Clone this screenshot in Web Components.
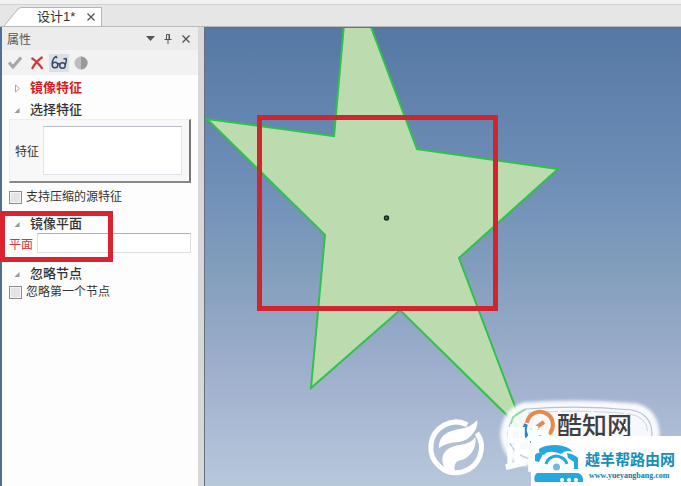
<!DOCTYPE html>
<html lang="zh-CN">
<head>
<meta charset="utf-8">
<meta name="viewport" content="width=device-width, initial-scale=1">
<title>设计1*</title>
<style>
    body {
        margin: 0;
        font-family: "Liberation Sans", "Noto Sans CJK SC", sans-serif;
        font-size: 12px;
        color: #333;
    }
</style>
</head>
<body>
<design-app>
    <tab-strip slot="tabs">设计1*</tab-strip>
    <property-panel slot="panel" heading="属性">
        <tree-section collapsed alert>镜像特征</tree-section>
        <tree-section>选择特征
            <feature-list slot="content">特征</feature-list>
            <check-option slot="content">支持压缩的源特征</check-option>
        </tree-section>
        <tree-section marked>镜像平面
            <plane-field slot="content">平面</plane-field>
        </tree-section>
        <tree-section>忽略节点
            <check-option slot="content">忽略第一个节点</check-option>
        </tree-section>
    </property-panel>
    <model-canvas slot="canvas"><site-marks></site-marks></model-canvas>
</design-app>

<script>
class DesignApp extends HTMLElement {
    constructor() {
        super();
        this.attachShadow({mode: "open"}).innerHTML = `
            <style>
                :host {
                    display: flex;
                    flex-direction: column;
                    height: 100vh;
                    background: #e6e6e6;
                    overflow: hidden;
                }

                .ribbon {
                    height: 4px;
                    background: #f1f1f1;
                    border-bottom: 1px solid #d2d2d2;
                }

                main {
                    flex: 1;
                    display: grid;
                    grid-template-columns: 204px 1fr;
                    min-height: 0;
                }
            </style>
            <div class="ribbon"></div>
            <slot name="tabs"></slot>
            <main>
                <slot name="panel"></slot>
                <slot name="canvas"></slot>
            </main>
        `;
    }
}

class TabStrip extends HTMLElement {
    constructor() {
        super();
        this.attachShadow({mode: "open"}).innerHTML = `
            <style>
                :host {
                    display: flex;
                    align-items: flex-end;
                    height: 21px;
                    padding-left: 4px;
                    border-bottom: 1px solid #b9b9b9;
                }

                .edge {
                    width: 18px;
                    height: 19px;
                    flex: none;
                }

                .tab {
                    display: flex;
                    align-items: center;
                    gap: 10px;
                    box-sizing: border-box;
                    height: 19px;
                    padding: 0 4px 0 15px;
                    background: #fff;
                    border-top: 1px solid #b5b5b5;
                    border-right: 1px solid #b5b5b5;
                    font-size: 13px;
                    line-height: 16px;
                    white-space: nowrap;
                }

                button {
                    display: flex;
                    padding: 2px;
                    border: 0;
                    background: none;
                }
            </style>
            <svg class="edge" viewBox="0 0 18 19">
                <path d="M0 19 14 2Q16 .5 18 .5V19Z" fill="#fff"/>
                <path d="M0 19 14 2Q16 .5 18 .5" fill="none" stroke="#b5b5b5"/>
            </svg>
            <div class="tab">
                <slot></slot>
                <button aria-label="关闭">
                    <svg width="8" height="8" stroke="#555" stroke-width="1.3"><path d="M.5.5l7 7M7.5.5l-7 7"/></svg>
                </button>
            </div>
        `;
    }
}

class PropertyPanel extends HTMLElement {
    constructor() {
        super();
        this.attachShadow({mode: "open"});
    }

    connectedCallback() {
        this.shadowRoot.innerHTML = `
            <style>
                :host {
                    display: flex;
                    flex-direction: column;
                    box-sizing: border-box;
                    background: #fdfdfd;
                    border-left: 2px solid #4b7296;
                    border-right: 6px solid #d7d8d9;
                }

                header, nav {
                    display: flex;
                    align-items: center;
                    box-sizing: border-box;
                    background: #ececec;
                }

                header {
                    height: 23px;
                    padding: 0 3px 0 5px;
                    color: #555;
                }

                header span {
                    flex: 1;
                }

                nav {
                    height: 25px;
                    padding-left: 3px;
                    gap: 2px;
                    background: #f2f2f2;
                }

                button {
                    display: flex;
                    align-items: center;
                    justify-content: center;
                    width: 18px;
                    height: 18px;
                    padding: 0;
                    border: 0;
                    background: none;
                }

                nav button {
                    width: 20px;
                }

                .on {
                    background: #dedfe2;
                }

                section {
                    display: flex;
                    flex-direction: column;
                    padding: 4px 7px 0;
                }
            </style>
            <header>
                <span>${this.getAttribute("heading")}</span>
                <button aria-label="菜单"><svg width="9" height="5"><path d="M0 0h9L4.500 5Z" fill="#555"/></svg></button>
                <button aria-label="固定"><svg width="8" height="10" fill="none" stroke="#555"><path d="M2.500.5h3v5h-3ZM5 .5v5M.5 5.500h7M4 6v4"/></svg></button>
                <button aria-label="关闭"><svg width="8" height="8" stroke="#555" stroke-width="1.400"><path d="M.5.5l7 7M7.500.5l-7 7"/></svg></button>
            </header>
            <nav>
                <button aria-label="确定"><svg width="14" height="13" fill="none" stroke="#a5a5a5" stroke-width="3"><path d="M1 6.500 5 11 13 1.500"/></svg></button>
                <button aria-label="取消"><svg width="14" height="14" fill="none" stroke="#d2373b" stroke-width="2.200"><path d="M1.500 2Q7 5 12.500 13M12.500 1Q6 5 2 13"/></svg></button>
                <button class="on" aria-label="预览">
                    <svg width="17" height="15" fill="none" stroke="#34496e" stroke-width="1.500">
                        <circle cx="4" cy="10" r="2.800"/>
                        <circle cx="11.500" cy="10.500" r="2.800"/>
                        <path d="M6.500 8.500 9 9M1.200 9Q1.500 3 5 1.500L6 3M14.200 10Q16 5 15 3.500L12.500 4"/>
                    </svg>
                </button>
                <button aria-label="显示"><svg width="14" height="14"><circle cx="7" cy="7" r="6.500" fill="#bdbdbd"/><path d="M7 .5a6.500 6.500 0 0 1 0 13Z" fill="#999"/></svg></button>
            </nav>
            <section><slot></slot></section>
        `;
    }
}

class TreeSection extends HTMLElement {
    constructor() {
        super();
        this.attachShadow({mode: "open"});
    }

    connectedCallback() {
        const arrow = this.hasAttribute("collapsed")
            ? `<path d="M1.500 1 5.500 4.500 1.500 8Z" fill="none" stroke="#aaa"/>`
            : `<path d="M5.500 2v5h-5Z" fill="#999"/>`;
        this.shadowRoot.innerHTML = `
            <style>
                :host {
                    display: block;
                    position: relative;
                    padding-bottom: 9px;
                }

                :host([collapsed]) {
                    padding-bottom: 4px;
                }

                h2 {
                    display: flex;
                    align-items: center;
                    gap: 9px;
                    margin: 0;
                    padding-left: 5px;
                    font-size: 13px;
                    font-weight: 500;
                    line-height: 18px;
                }

                :host([alert]) h2 {
                    color: #d81e24;
                    font-weight: bold;
                }

                :host([marked]) {
                    padding-bottom: 12px;
                }

                :host([marked])::after {
                    content: "";
                    position: absolute;
                    left: -9px;
                    top: -4px;
                    bottom: 3px;
                    width: 103px;
                    border: 5px solid #d9242f;
                }
            </style>
            <h2><svg width="7" height="9">${arrow}</svg><slot></slot></h2>
            <slot name="content"></slot>
        `;
    }
}

class FeatureList extends HTMLElement {
    constructor() {
        super();
        this.attachShadow({mode: "open"}).innerHTML = `
            <style>
                :host {
                    display: block;
                    margin-bottom: 5px;
                    background: #f8f8f9;
                    border: 1px solid #eceef0;
                    border-right: 2px solid #777;
                    border-bottom: 2px solid #888;
                }

                label {
                    display: flex;
                    align-items: center;
                    gap: 4px;
                    padding: 6px 7px 6px 5px;
                }

                textarea {
                    flex: 1;
                    min-width: 0;
                    box-sizing: border-box;
                    height: 49px;
                    background: #fff;
                    border: 1px solid #dfe3ea;
                    border-top-color: #b9bdc6;
                    resize: none;
                }
            </style>
            <label><slot></slot><textarea></textarea></label>
        `;
    }
}

class PlaneField extends HTMLElement {
    constructor() {
        super();
        this.attachShadow({mode: "open"}).innerHTML = `
            <style>
                :host {
                    display: block;
                    color: #d8343a;
                }

                label {
                    display: flex;
                    align-items: center;
                    gap: 4px;
                }

                input {
                    flex: 1;
                    min-width: 0;
                    box-sizing: border-box;
                    height: 20px;
                    background: #fff;
                    border: 1px solid #dfdfdf;
                    border-top-color: #b0b0b0;
                }
            </style>
            <label><slot></slot><input type="text"></label>
        `;
    }
}

class CheckOption extends HTMLElement {
    constructor() {
        super();
        this.attachShadow({mode: "open"}).innerHTML = `
            <style>
                :host {
                    display: block;
                    line-height: 18px;
                }

                label {
                    display: flex;
                    align-items: center;
                    gap: 4px;
                }

                input {
                    appearance: none;
                    width: 13px;
                    height: 13px;
                    margin: 0;
                    border: 1px solid #8c8c8c;
                    background: #e4e4e4;
                    box-shadow: inset 0 0 0 1px #f6f6f6;
                }

                input:checked {
                    background: #777;
                }
            </style>
            <label><input type="checkbox"><slot></slot></label>
        `;
    }
}

class ModelCanvas extends HTMLElement {
    constructor() {
        super();
        this.attachShadow({mode: "open"}).innerHTML = `
            <style>
                :host {
                    display: block;
                    position: relative;
                    min-width: 0;
                    overflow: hidden;
                    border-left: 1px solid #65707e;
                    border-top: 1px solid #65707e;
                    background: linear-gradient(#5578a4, #6f8fb7 34%, #849fbd 54%, #a2b2cf 78%, #b7c8db);
                }

                .scene {
                    display: block;
                    width: 100%;
                    height: 100%;
                }
            </style>
            <svg class="scene" role="img" aria-label="五角星">
                <path d="M139.500-9 129 108 2 91 120 207 106 360 195 282 320 405 254 230 353 141 212 121 163-9Z"
                    fill="#bcdcb0" stroke="#2fc24a" stroke-width="2"/>
                <circle cx="181.500" cy="190" r="2" fill="#456b50" stroke="#102c1c" stroke-width="1.500"/>
                <rect x="54.500" y="89.500" width="236" height="191" fill="none" stroke="#d0252f" stroke-width="5"/>
            </svg>
            <slot></slot>
        `;
    }
}

class SiteMarks extends HTMLElement {
    constructor() {
        super();
        this.attachShadow({mode: "open"}).innerHTML = `
            <style>
                :host {
                    position: absolute;
                    right: 0;
                    bottom: 0;
                }

                svg {
                    display: block;
                }

                text {
                    font-family: "Noto Sans CJK SC", sans-serif;
                    font-weight: bold;
                }

                .brand {
                    font-size: 25px;
                    font-weight: 500;
                }

                .url {
                    font-family: "Liberation Serif", serif;
                    font-size: 8px;
                }
            </style>
            <svg width="261" height="96">
                <defs>
                    <filter id="fuzz" x="-10%" y="-20%" width="120%" height="140%"><feGaussianBlur stdDeviation="1.500"/></filter>
                </defs>
                <!-- round badge -->
                <path d="M104 14Q160 10 216 15 236 20 238 43 236 72 215 74H105Q84 70 82 44 84 20 104 14Z"
                    fill="#fff" fill-opacity=".9" stroke="#fff" stroke-opacity=".7" stroke-width="4" filter="url(#fuzz)"/>
                <path d="M106 19Q160 15 212 20 231 24 232 43 230 64 212 68H107Q89 62 88 43 90 24 106 19Z"
                    fill="none" stroke="#b5c3d8" stroke-width="1.200"/>
                <path d="M108 23Q160 19 210 24 227 27 228 43"
                    fill="none" stroke="#cbd5e4" stroke-dasharray="30 3"/>
                <path d="M106 19 93 27 91 34" fill="none" stroke="#8fdc9b" stroke-width="1.500"/>
                <path d="M107 33A13 13 0 1 1 129 44" fill="none" stroke="#e58a4c" stroke-width="4"/>
                <path d="M106 34A13 13 0 0 0 121 52" fill="none" stroke="#2d83c6" stroke-width="4"/>
                <path d="M124 32 114 39 124 46" fill="none" stroke="#e58a4c" stroke-width="4"/>
                <text class="brand" x="137" y="45" fill="#3f3f42">酷知网</text>
                <text x="84" y="77" font-size="49" fill="#fff">路</text>
                <path d="M198 35h2M204 35h2M210 36h2" stroke="#fff" stroke-width="2"/>
                <!-- card -->
                <rect x="111" y="46" width="150" height="50" fill="#fff"/>
                <path d="M119 59Q124 55 136 55 149 56 153 62 146 59 141 64 128 59 124 65L119 62Z" fill="#25a7df"/>
                <path d="M115 65Q118 61 123 64L119 72 115 71ZM147 63Q154 64 158 68V79H154V72L148 68Z" fill="#25a7df"/>
                <path d="M126 74Q128 67 136 66 145 67 147 74" fill="none" stroke="#25a7df" stroke-width="3"/>
                <circle cx="136.500" cy="77" r="3.500" fill="#6bbbe2"/>
                <path d="M117 83H158Q164 85 163 92H115Q113 86 117 83Z" fill="#25a7df"/>
                <path d="M142 90v.1M149 90v.1M156 90v.1" stroke="#fff" stroke-width="4" stroke-linecap="round"/>
                <text x="165" y="75" font-size="15" fill="#168dbb">越羊帮路由网</text>
                <a href="#"><text class="url" x="169" y="88" fill="#16799f">www.yueyangbang.com</text></a>
                <!-- leaf mark -->
                <g transform="translate(4 25) scale(.333)" fill="#fff">
                    <path d="M130 29A76 76 0 1 0 159 54" fill="none" stroke="#fff" stroke-width="15"/>
                    <path d="M44 100Q43 68 70 53 85 45 112 41 142 36 160 15 162 38 148 54 134 76 105 81 67 82 44 100Z"/>
                    <path d="M66 166Q44 130 66 107 81 92 112 89 139 86 155 66 157 92 144 112 130 132 106 137 86 142 93 174Z"/>
                </g>
            </svg>
        `;
    }
}

customElements.define("design-app", DesignApp);
customElements.define("tab-strip", TabStrip);
customElements.define("property-panel", PropertyPanel);
customElements.define("tree-section", TreeSection);
customElements.define("feature-list", FeatureList);
customElements.define("plane-field", PlaneField);
customElements.define("check-option", CheckOption);
customElements.define("model-canvas", ModelCanvas);
customElements.define("site-marks", SiteMarks);
</script>
</body>
</html>
